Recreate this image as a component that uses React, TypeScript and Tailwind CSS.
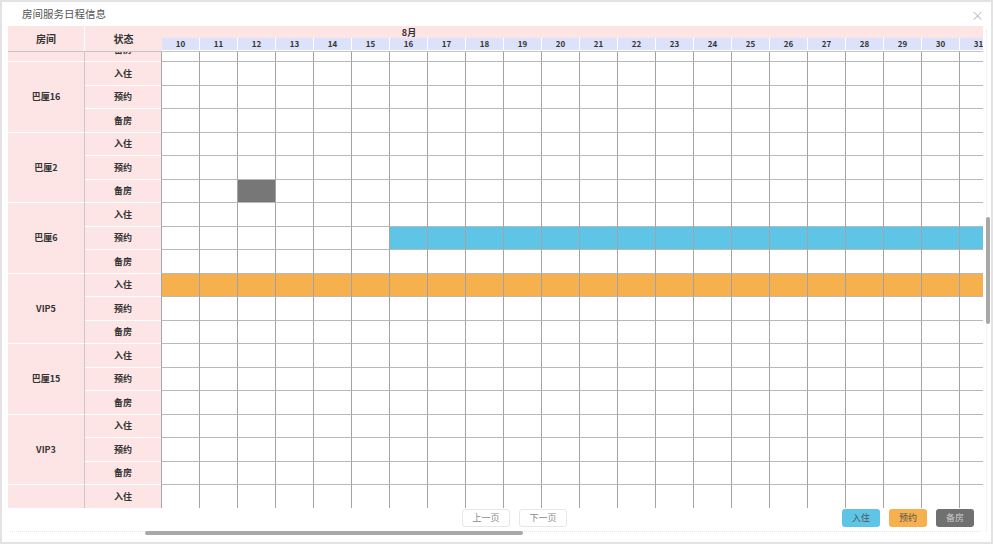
import React from "react";

const DAYS = Array.from({ length: 31 }, (_, i) => i + 1);
const STATUS = ["入住", "预约", "备房"];

type Mark = { s: number; from: number; to: number; color: string };
type Room = { name: string; marks: Mark[] };

const ROOMS: Room[] = [
  { name: "巴厘9", marks: [] },
  { name: "巴厘16", marks: [] },
  { name: "巴厘2", marks: [{ s: 2, from: 12, to: 12, color: "bg-[#777777]" }] },
  { name: "巴厘6", marks: [{ s: 1, from: 16, to: 31, color: "bg-[#5ec5e6]" }] },
  { name: "VIP5", marks: [{ s: 0, from: 1, to: 31, color: "bg-[#f6b04e]" }] },
  { name: "巴厘15", marks: [] },
  { name: "VIP3", marks: [] },
  { name: "VIP1", marks: [] },
];

const font = "font-['Noto_Sans_CJK_SC','Noto_Sans',sans-serif]";

function cellColor(room: Room, s: number, d: number) {
  const m = room.marks.find((k) => k.s === s && d >= k.from && d <= k.to);
  return m ? m.color : "bg-white";
}

function RoomGroup({ room }: { room: Room }) {
  return (
    <div className="flex">
      <div className="w-[77px] h-[70.5px] bg-[#fde5e5] border-r border-[#c9c9c9] border-b border-b-white flex items-center justify-center text-[9px] font-bold text-[#333]">
        {room.name}
      </div>
      <div className="w-[77px] border-r border-[#a6a6a6]">
        {STATUS.map((s) => (
          <div
            key={s}
            className="h-[23.5px] bg-[#fde5e5] border-b border-white flex items-center justify-center text-[9px] font-bold text-[#333]"
          >
            {s}
          </div>
        ))}
      </div>
      <div className="w-[821px] overflow-hidden">
        <div className="ml-[-342px] w-[1178px]">
          {STATUS.map((s, si) => (
            <div key={s} className="flex h-[23.5px]">
              {DAYS.map((d) => (
                <div
                  key={d}
                  className={`w-[38px] shrink-0 h-full border-r border-b border-r-[#a3a3a3] border-b-[#b9b9b9] ${cellColor(room, si, d)}`}
                />
              ))}
            </div>
          ))}
        </div>
      </div>
    </div>
  );
}

export default function App() {
  return (
    <div className={`w-[993px] h-[544px] bg-white border-2 border-[#e3e3e3] flex flex-col ${font}`}>
      {/* title bar */}
      <div className="h-[24px] flex items-center justify-between pl-[20px] pr-[7px]">
        <span className="text-[10.5px] text-[#555]">房间服务日程信息</span>
        <span className="text-[13px] leading-none text-[#bdbdbd]">×</span>
      </div>

      <div className="flex pl-[6px]">
        <div className="w-[975px] flex flex-col">
          {/* header */}
          <div className="flex h-[26px] border-b border-[#c4c4c4]">
            <div className="w-[77px] bg-[#fde5e5] border-r border-white flex items-center justify-center text-[10px] font-bold text-[#333]">
              房间
            </div>
            <div className="w-[77px] bg-[#fde5e5] flex items-center justify-center text-[10px] font-bold text-[#333]">
              状态
            </div>
            <div className="w-[821px] overflow-hidden">
              <div className="ml-[-342px] w-[1178px]">
                <div className="h-[12px] bg-[#fde5e5] flex items-center justify-center text-[9px] font-bold text-[#333] leading-none">
                  8月
                </div>
                <div className="flex h-[12px]">
                  {DAYS.map((d) => (
                    <div
                      key={d}
                      className="w-[38px] shrink-0 bg-[#dde2fb] border-r border-white flex items-center justify-center text-[8px] font-bold text-[#333] leading-none"
                    >
                      {d}
                    </div>
                  ))}
                </div>
              </div>
            </div>
          </div>

          {/* body */}
          <div className="h-[456px] overflow-hidden">
            <div className="mt-[-60.5px]">
              {ROOMS.map((r) => (
                <RoomGroup key={r.name} room={r} />
              ))}
            </div>
          </div>

          {/* footer */}
          <div className="h-[23px] flex items-start pt-[1px]">
            <div className="ml-[454px] flex gap-[9px]">
              <button className="w-[48px] h-[18px] border border-[#e6e6e6] rounded-[3px] text-[9px] text-[#888] bg-white">
                上一页
              </button>
              <button className="w-[48px] h-[18px] border border-[#e6e6e6] rounded-[3px] text-[9px] text-[#888] bg-white">
                下一页
              </button>
            </div>
            <div className="ml-auto mr-[9px] flex gap-[9px]">
              <div className="w-[38px] h-[18px] rounded-[3px] bg-[#5ec5e6] flex items-center justify-center text-[9px] text-[#555]">
                入住
              </div>
              <div className="w-[38px] h-[18px] rounded-[3px] bg-[#f6b04e] flex items-center justify-center text-[9px] text-[#555]">
                预约
              </div>
              <div className="w-[38px] h-[18px] rounded-[3px] bg-[#707070] flex items-center justify-center text-[9px] text-[#ccc]">
                备房
              </div>
            </div>
          </div>

          {/* horizontal scrollbar */}
          <div className="h-[4px] mx-[2px] border-t border-dotted border-[#e8e8e8] relative">
            <div className="absolute left-[135px] top-[-1px] w-[378px] h-[4px] rounded-full bg-[#a8a8a8]" />
          </div>
        </div>

        {/* vertical scrollbar */}
        <div className="ml-[3px] w-[4px] mt-[4px] h-[502px] border-l border-dotted border-[#e8e8e8] relative">
          <div className="absolute left-[-1px] top-[187px] w-[4px] h-[107px] rounded-full bg-[#a8a8a8]" />
        </div>
      </div>
    </div>
  );
}
